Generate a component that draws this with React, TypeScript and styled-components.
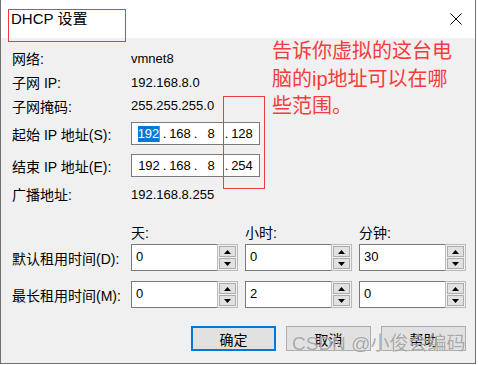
import { Fragment } from "react";
import styled, { createGlobalStyle } from "styled-components";

const GlobalStyle = createGlobalStyle`
  html, body {
    margin: 0;
    padding: 0;
    background: #ffffff;
  }
  body {
    font-family: "Liberation Sans", "Noto Sans CJK SC", sans-serif;
    color: #000;
  }
`;

const Window = styled.div`
  position: relative;
  width: 476px;
  height: 364px;
  box-sizing: border-box;
  border: 1px solid #707070;
  border-top: none;
  background: #f0f0f0;
  overflow: hidden;
`;

const TitleBar = styled.div`
  height: 38px;
  background: #ffffff;
  display: flex;
  align-items: center;
  justify-content: space-between;
  padding: 0 13px 0 10px;
`;

const Title = styled.span`
  font-size: 15px;
  line-height: 18px;
  margin-top: -1px;
`;

const Body = styled.div`
  padding: 8px 9px 0 11px;
`;

const InfoGrid = styled.div`
  display: grid;
  grid-template-columns: 119px auto;
  grid-template-rows: 24px 24px 23px 33px 31px 26px;
  align-items: center;
`;

const Label = styled.span`
  font-size: 14px;
  white-space: nowrap;
`;

const Value = styled.span`
  font-size: 13px;
`;

const IpField = styled.div`
  width: 129px;
  height: 23px;
  box-sizing: border-box;
  border: 1px solid #7a7a7a;
  background: #fff;
  display: flex;
  align-items: center;
  padding-left: 5px;
  font-size: 13px;
`;

const Segment = styled.span`
  width: 24px;
  text-align: center;
`;

const Dot = styled.span`
  width: 7px;
  text-align: center;
`;

const Selected = styled.span`
  background: #0078d7;
  color: #fff;
  line-height: 16px;
  display: inline-block;
  border-right: 1px solid #e07b10;
`;

const LeaseRow = styled.div<{ $gap: number; $height: number }>`
  display: grid;
  grid-template-columns: 112px repeat(3, 107px);
  column-gap: 7px;
  align-items: center;
  height: ${(p) => p.$height}px;
  margin-top: ${(p) => p.$gap}px;
`;

const Spinner = styled.div`
  display: flex;
  height: 27px;
`;

const SpinInput = styled.div`
  flex: 1;
  box-sizing: border-box;
  border: 1px solid #7a7a7a;
  border-right: none;
  background: #fff;
  font-size: 13px;
  padding: 4px 0 0 4px;
  line-height: 15px;
`;

const SpinButtons = styled.div`
  width: 21px;
  box-sizing: border-box;
  border: 1px solid #bcbcbc;
  background: #f0f0f0;
  display: flex;
  flex-direction: column;
  gap: 1px;
  padding: 1px;
`;

const SpinButton = styled.div`
  flex: 1;
  box-sizing: border-box;
  border: 1px solid #adadad;
  background: #e1e1e1;
  display: flex;
  align-items: center;
  justify-content: center;
`;

const ButtonBar = styled.div`
  display: flex;
  justify-content: flex-end;
  gap: 10px;
  margin-top: 18px;
`;

const DialogButton = styled.button<{ $default?: boolean }>`
  width: 85px;
  height: 25px;
  box-sizing: border-box;
  border: ${(p) => (p.$default ? "2px solid #0078d7" : "1px solid #adadad")};
  background: #e1e1e1;
  font-family: inherit;
  font-size: 14px;
  color: #000;
  padding: 0;
`;

const RedBox = styled.div<{ $x: number; $y: number; $w: number; $h: number }>`
  position: absolute;
  left: ${(p) => p.$x}px;
  top: ${(p) => p.$y}px;
  width: ${(p) => p.$w}px;
  height: ${(p) => p.$h}px;
  box-sizing: border-box;
  border: 1px solid #ee3b3b;
  pointer-events: none;
`;

const Note = styled.div`
  position: absolute;
  left: 271px;
  top: 38px;
  font-size: 20px;
  line-height: 27.5px;
  color: #f53c3c;
  white-space: nowrap;
`;

const Watermark = styled.div`
  position: absolute;
  left: 291px;
  top: 332px;
  font-size: 19px;
  line-height: 24px;
  color: rgba(115, 115, 115, 0.62);
  text-shadow: 0 0 1px rgba(255, 255, 255, 0.9);
  white-space: nowrap;
  pointer-events: none;
`;

function CloseIcon() {
  return (
    <svg width="12" height="12" viewBox="0 0 12 12">
      <path d="M0.5 0.5 L11.5 11.5 M11.5 0.5 L0.5 11.5" stroke="#000" strokeWidth="1" />
    </svg>
  );
}

function Arrow({ up }: { up?: boolean }) {
  return (
    <svg width="7" height="4" viewBox="0 0 7 4">
      <polygon points={up ? "0,4 7,4 3.5,0" : "0,0 7,0 3.5,4"} fill="#000" />
    </svg>
  );
}

function NumberBox({ value }: { value: string }) {
  return (
    <Spinner>
      <SpinInput>{value}</SpinInput>
      <SpinButtons>
        <SpinButton>
          <Arrow up />
        </SpinButton>
        <SpinButton>
          <Arrow />
        </SpinButton>
      </SpinButtons>
    </Spinner>
  );
}

function IpAddress({ parts, selectFirst }: { parts: string[]; selectFirst?: boolean }) {
  return (
    <IpField>
      {parts.map((p, i) => (
        <Fragment key={i}>
          {i > 0 && <Dot>.</Dot>}
          <Segment>{i === 0 && selectFirst ? <Selected>{p}</Selected> : p}</Segment>
        </Fragment>
      ))}
    </IpField>
  );
}

export default function App() {
  return (
    <>
      <GlobalStyle />
      <Window>
        <TitleBar>
          <Title>DHCP 设置</Title>
          <CloseIcon />
        </TitleBar>
        <Body>
          <InfoGrid>
            <Label>网络:</Label>
            <Value>vmnet8</Value>
            <Label>子网 IP:</Label>
            <Value>192.168.8.0</Value>
            <Label>子网掩码:</Label>
            <Value>255.255.255.0</Value>
            <Label>起始 IP 地址(S):</Label>
            <IpAddress parts={["192", "168", "8", "128"]} selectFirst />
            <Label>结束 IP 地址(E):</Label>
            <IpAddress parts={["192", "168", "8", "254"]} />
            <Label>广播地址:</Label>
            <Value>192.168.8.255</Value>
          </InfoGrid>

          <LeaseRow $gap={15} $height={20}>
            <span />
            <Label>天:</Label>
            <Label>小时:</Label>
            <Label>分钟:</Label>
          </LeaseRow>
          <LeaseRow $gap={2} $height={27}>
            <Label>默认租用时间(D):</Label>
            <NumberBox value="0" />
            <NumberBox value="0" />
            <NumberBox value="30" />
          </LeaseRow>
          <LeaseRow $gap={10} $height={27}>
            <Label>最长租用时间(M):</Label>
            <NumberBox value="0" />
            <NumberBox value="2" />
            <NumberBox value="0" />
          </LeaseRow>

          <ButtonBar>
            <DialogButton $default>确定</DialogButton>
            <DialogButton>取消</DialogButton>
            <DialogButton>帮助</DialogButton>
          </ButtonBar>
        </Body>

        <RedBox $x={7} $y={9} $w={118} $h={33} />
        <RedBox $x={222} $y={96} $w={42} $h={93} />
        <Note>
          告诉你虚拟的这台电
          <br />
          脑的ip地址可以在哪
          <br />
          些范围。
        </Note>
        <Watermark>CSDN @小俊会编码</Watermark>
      </Window>
    </>
  );
}
